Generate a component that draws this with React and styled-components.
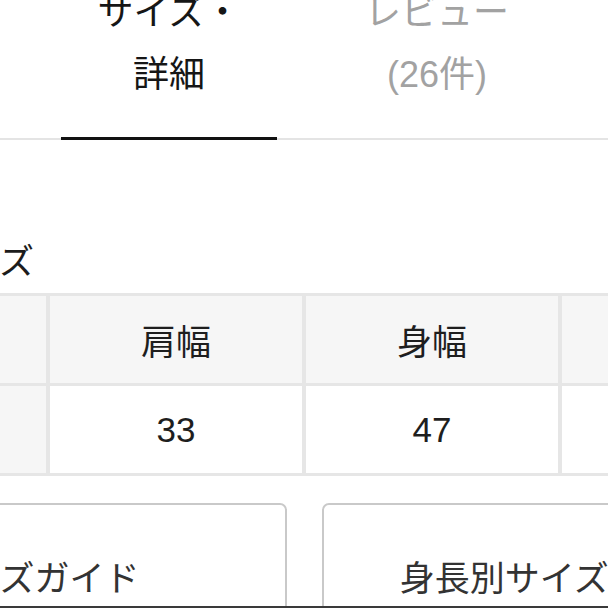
import React from "react";
import styled, { createGlobalStyle } from "styled-components";

const Global = createGlobalStyle`
  html, body {
    margin: 0;
    padding: 0;
    background: #ffffff;
    overflow: hidden;
  }
  * { box-sizing: border-box; }
`;

const Screen = styled.div`
  width: 608px;
  height: 608px;
  overflow: hidden;
  background: #ffffff;
  font-family: "Liberation Sans", "Noto Sans CJK JP", sans-serif;
  color: #1c1c1c;
`;

const TabBar = styled.div`
  display: flex;
  margin-top: -18px;
  padding-left: 35px;
  border-bottom: 2px solid #e4e4e4;
`;

const Tab = styled.div`
  flex: none;
  width: 268px;
  display: flex;
  flex-direction: column;
`;

const TabLabel = styled.div`
  font-size: 36px;
  line-height: 62px;
  text-align: center;
  padding-bottom: 31px;
  color: ${(p) => (p.$active ? "#161616" : "#a2a2a2")};
`;

const Indicator = styled.div`
  position: relative;
  height: 3px;
  margin: 0 26px -2px;
  background: ${(p) => (p.$active ? "#111111" : "transparent")};
`;

const SectionTitle = styled.h2`
  margin: 97px 0 6px -70px;
  font-size: 35px;
  line-height: 50px;
  font-weight: 400;
  color: #1c1c1c;
  white-space: nowrap;
`;

const Table = styled.div`
  display: grid;
  grid-template-columns: repeat(4, 252px);
  grid-auto-rows: 87px;
  gap: 3px 4px;
  padding: 3px 4px;
  width: max-content;
  margin-left: -210px;
  background: #e6e6e6;
`;

const Cell = styled.div`
  display: flex;
  align-items: center;
  justify-content: center;
  font-size: 35px;
  color: #1e1e1e;
  background: ${(p) => (p.$shaded ? "#f6f6f6" : "#ffffff")};
`;

const ButtonRow = styled.div`
  display: flex;
  gap: 35px;
  margin: 27px 0 0 -217px;
  width: max-content;
`;

const GuideButton = styled.button`
  flex: none;
  width: 504px;
  height: 144px;
  display: flex;
  align-items: center;
  justify-content: center;
  border: 2px solid #c9c9c9;
  border-radius: 7px;
  background: #ffffff;
  font-family: inherit;
  font-size: 35px;
  color: #333333;
  padding: 0;
  white-space: nowrap;
`;

const BottomBar = styled.div`
  position: fixed;
  left: 0;
  right: 0;
  bottom: 0;
  height: 2px;
  background: #3a3a3a;
`;

const header = ["サイズ", "肩幅", "身幅", "着丈"];
const row = ["フリー", "33", "47", "60"];

export default function App() {
  return (
    <Screen>
      <Global />
      <TabBar>
        <Tab>
          <TabLabel $active>
            サイズ・
            <br />
            詳細
          </TabLabel>
          <Indicator $active />
        </Tab>
        <Tab>
          <TabLabel>
            レビュー
            <br />
            (26件)
          </TabLabel>
          <Indicator />
        </Tab>
      </TabBar>

      <SectionTitle>サイズ</SectionTitle>

      <Table>
        {header.map((h) => (
          <Cell key={h} $shaded>
            {h}
          </Cell>
        ))}
        {row.map((v, i) => (
          <Cell key={v} $shaded={i === 0}>
            {v}
          </Cell>
        ))}
      </Table>

      <ButtonRow>
        <GuideButton>サイズガイド</GuideButton>
        <GuideButton>身長別サイズチャート</GuideButton>
      </ButtonRow>
      <BottomBar />
    </Screen>
  );
}
